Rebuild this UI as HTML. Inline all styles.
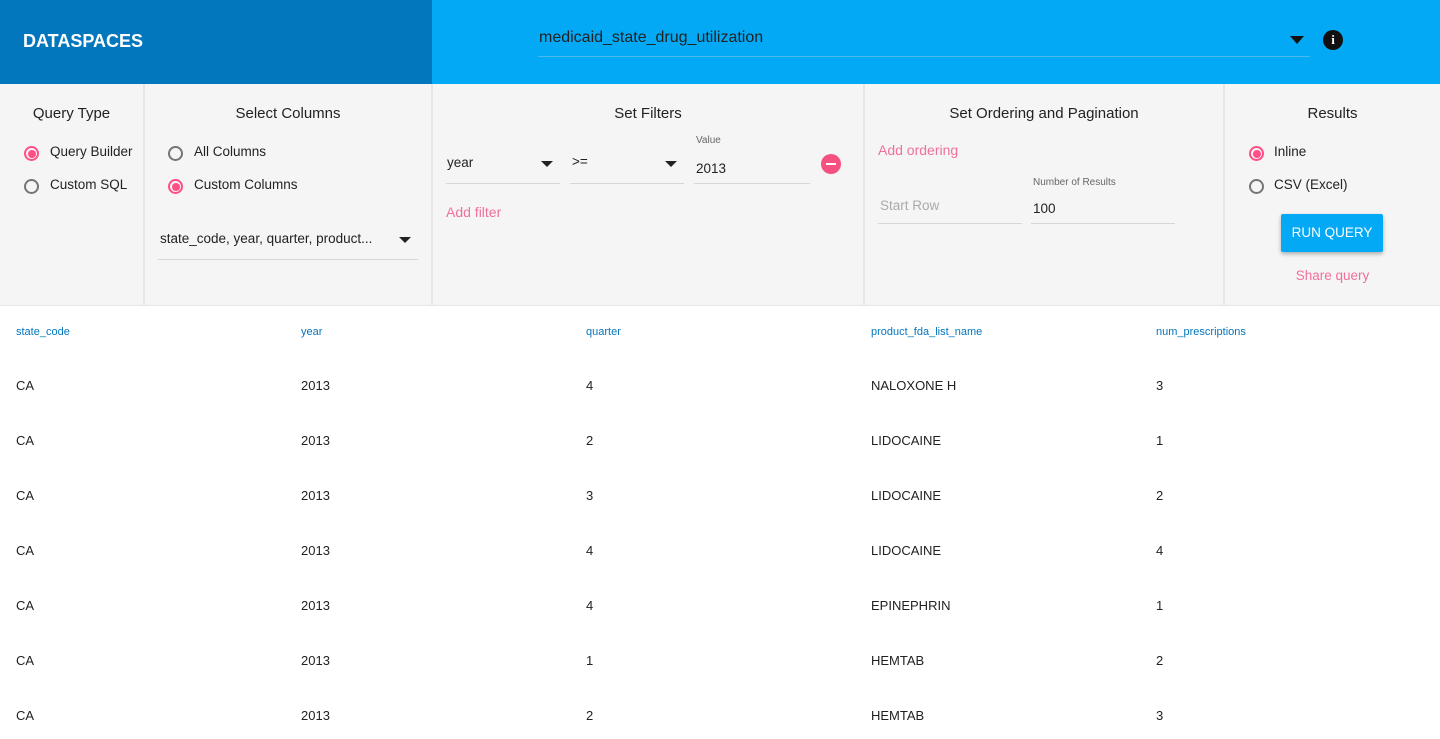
<!DOCTYPE html>
<html><head><meta charset="utf-8"><style>
*{box-sizing:border-box;margin:0;padding:0}
body{width:1440px;height:739px;overflow:hidden;background:#fff;font-family:"Liberation Sans",sans-serif;color:#222;position:relative}
.a{position:absolute}
.hl{left:0;top:0;width:432px;height:84px;background:#0277bd;color:#fff;font-size:18px;font-weight:bold;padding:31px 23px}
.hr{left:432px;top:0;width:1008px;height:84px;background:#03a9f4}
.panel{top:84px;height:222px;background:#f5f5f5;border-right:2px solid #e6e6e6;border-bottom:1px solid #e6e6e6}
.t{font-size:15px;text-align:center;position:absolute;top:21px;left:0;right:0;color:#222}
.radio{position:absolute;width:15px;height:15px;border:2px solid #757575;border-radius:50%}
.radio.on{border-color:#ff4f86}
.radio.on::after{content:"";position:absolute;left:1.5px;top:1.5px;width:8px;height:8px;border-radius:50%;background:#ff4f86}
.lbl{position:absolute;font-size:13.5px;color:#222}
.line{position:absolute;height:1px;background:#d6d6d6}
.tri{position:absolute;width:0;height:0;border-left:6px solid transparent;border-right:6px solid transparent;border-top:6px solid #222}
.pink{position:absolute;font-size:14px;color:#f0709a}
.th{position:absolute;top:326px;font-size:11px;color:#0277bd}
.td{position:absolute;font-size:13px;color:#222}
</style></head><body>
<div class="a hl">DATASPACES</div>
<div class="a hr">
 <div class="a" style="left:107px;top:29px;font-size:16px;color:#222">medicaid_state_drug_utilization</div>
 <div class="line" style="left:106px;top:56px;width:772px;background:#4fb8ea"></div>
 <div class="tri" style="left:858px;top:36px;border-top-color:#111;border-left-width:7px;border-right-width:7px;border-top-width:8px"></div>
 <div class="a" style="left:891px;top:30px;width:20px;height:20px;border-radius:50%;background:#111;color:#fff;font-size:13px;font-weight:bold;text-align:center;line-height:20px;font-family:'Liberation Serif',serif">i</div>
</div>

<div class="a panel" style="left:0;width:145px">
 <div class="t">Query Type</div>
 <div class="radio on" style="left:24px;top:62px"></div><div class="lbl" style="left:50px;top:60px">Query Builder</div>
 <div class="radio" style="left:24px;top:95px"></div><div class="lbl" style="left:50px;top:93px">Custom SQL</div>
</div>
<div class="a panel" style="left:145px;width:288px">
 <div class="t">Select Columns</div>
 <div class="radio" style="left:23px;top:62px"></div><div class="lbl" style="left:49px;top:60px">All Columns</div>
 <div class="radio on" style="left:23px;top:95px"></div><div class="lbl" style="left:49px;top:93px">Custom Columns</div>
 <div class="lbl" style="left:15px;top:147px;font-size:13.5px">state_code, year, quarter, product...</div>
 <div class="tri" style="left:254px;top:153px"></div>
 <div class="line" style="left:13px;top:175px;width:260px"></div>
</div>
<div class="a panel" style="left:433px;width:432px">
 <div class="t">Set Filters</div>
 <div class="lbl" style="left:14px;top:71px">year</div><div class="tri" style="left:108px;top:77px"></div>
 <div class="line" style="left:13px;top:99px;width:114px"></div>
 <div class="lbl" style="left:139px;top:70px">&gt;=</div><div class="tri" style="left:232px;top:77px"></div>
 <div class="line" style="left:137px;top:99px;width:114px"></div>
 <div class="lbl" style="left:263px;top:51px;font-size:10px;color:#666">Value</div>
 <div class="lbl" style="left:263px;top:77px">2013</div>
 <div class="line" style="left:261px;top:99px;width:116px"></div>
 <div class="a" style="left:388px;top:70px;width:20px;height:20px;border-radius:50%;background:#f5507f"><div class="a" style="left:5px;top:9px;width:10px;height:2px;background:#fff"></div></div>
 <div class="pink" style="left:13px;top:120px">Add filter</div>
</div>
<div class="a panel" style="left:865px;width:360px">
 <div class="t">Set Ordering and Pagination</div>
 <div class="pink" style="left:13px;top:58px">Add ordering</div>
 <div class="lbl" style="left:15px;top:114px;color:#aaa">Start Row</div>
 <div class="line" style="left:13px;top:139px;width:144px"></div>
 <div class="lbl" style="left:168px;top:93px;font-size:10px;color:#666">Number of Results</div>
 <div class="lbl" style="left:168px;top:117px">100</div>
 <div class="line" style="left:166px;top:139px;width:144px"></div>
</div>
<div class="a panel" style="left:1225px;width:215px;border-right:none">
 <div class="t">Results</div>
 <div class="radio on" style="left:24px;top:62px"></div><div class="lbl" style="left:49px;top:60px">Inline</div>
 <div class="radio" style="left:24px;top:95px"></div><div class="lbl" style="left:49px;top:93px">CSV (Excel)</div>
 <div class="a" style="left:56px;top:130px;width:102px;height:38px;background:#03a9f4;color:#fff;font-size:13.5px;text-align:center;line-height:38px;border-radius:2px;box-shadow:0 2px 4px rgba(0,0,0,.3)">RUN QUERY</div>
 <div class="pink" style="left:0;right:0;text-align:center;top:184px;font-size:13.5px">Share query</div>
</div>

<div class="th" style="left:16px">state_code</div>
<div class="th" style="left:301px">year</div>
<div class="th" style="left:586px">quarter</div>
<div class="th" style="left:871px">product_fda_list_name</div>
<div class="th" style="left:1156px">num_prescriptions</div>

<div id="rows"></div>
<script>
var d=[["4","NALOXONE H","3"],["2","LIDOCAINE","1"],["3","LIDOCAINE","2"],["4","LIDOCAINE","4"],["4","EPINEPHRIN","1"],["1","HEMTAB","2"],["2","HEMTAB","3"]];
var h="";d.forEach(function(r,i){var y=378+55*i;h+='<div class="td" style="left:16px;top:'+y+'px">CA</div><div class="td" style="left:301px;top:'+y+'px">2013</div><div class="td" style="left:586px;top:'+y+'px">'+r[0]+'</div><div class="td" style="left:871px;top:'+y+'px">'+r[1]+'</div><div class="td" style="left:1156px;top:'+y+'px">'+r[2]+'</div>';});
document.getElementById("rows").innerHTML=h;
</script>
</body></html>
